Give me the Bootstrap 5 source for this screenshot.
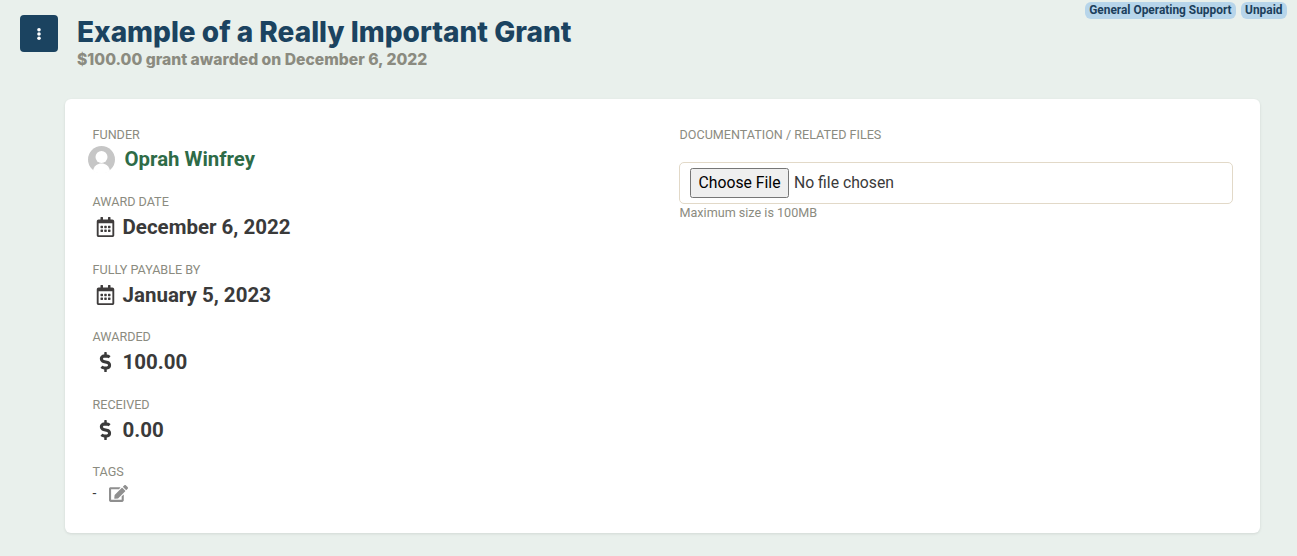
<!doctype html>
<html lang="en"><head><meta charset="utf-8"><title>Grant</title>
<link href="https://cdn.jsdelivr.net/npm/bootstrap@5.3.0/dist/css/bootstrap.min.css" rel="stylesheet">
<style>
html,body{height:556px;overflow:hidden}
body{background:#e9f0ec;font-family:Roboto,sans-serif;color:#3a3a3a}
.tagbar{top:2px;right:10px;gap:5px}
.pill{background:#b7d5ea;color:#1c3f5c;font-size:11.900px;font-weight:700;line-height:16px;padding:0 4.500px 0 4px;border-radius:6px;height:17px}
.head-row{padding:14px 0 0 20px;height:99px}
.menu-btn{width:38px;height:37px;background:#1b4360;border-radius:4px;margin-right:19px;margin-top:1px}
.ttl{font-family:Inter,sans-serif;font-weight:800;font-size:28px;line-height:34px;color:#1b4360;margin:1px 0 0}
.sub{font-family:Inter,sans-serif;font-weight:800;font-size:15.700px;line-height:20px;color:#8b8b80;margin-top:1px}
.panel{margin:0 37px 0 65px;height:434px;border-radius:6px;box-shadow:0 1px 3px rgba(0,0,0,.1);padding:28px 27px 0 27.500px}
.lhalf{width:587px}
.lab{font-size:12.600px;line-height:16px;color:#8b8b80;text-transform:uppercase}
.val{font-size:20.500px;font-weight:700;line-height:28px;color:#3a3a3a;margin-top:3px;margin-bottom:20.500px;height:28px}
.ico-box{width:25px;height:20px;margin-right:5px}
.funder{font-size:20.400px;font-weight:700;color:#2e6b47;line-height:28px;margin-left:-5px;margin-top:1px;margin-bottom:20px;height:30px}
.avatar{width:27px;height:27px;margin-right:10px}
.filebox{margin:19px 0 0 -.5px;height:42px;border:1px solid #e2d9c8;border-radius:5px;padding:0 10px;font-size:15.750px}
.filebox input::file-selector-button{margin-right:5px;padding:1px 6.500px}
.hint{font-size:12.600px;line-height:18px;color:#8b8b80}
.tagline{font-size:14px;line-height:20px;margin-top:3px}
.edit-ico{width:19px;height:17px;margin-left:13px}
</style></head><body>
<svg class="d-none"><defs>
<symbol id="cal" viewBox="0 0 448 512"><path fill="#3f3c3c" d="M148 288h-40c-6.600 0-12-5.400-12-12v-40c0-6.600 5.400-12 12-12h40c6.600 0 12 5.400 12 12v40c0 6.600-5.400 12-12 12zm108-12v-40c0-6.600-5.400-12-12-12h-40c-6.600 0-12 5.400-12 12v40c0 6.600 5.400 12 12 12h40c6.600 0 12-5.400 12-12zm96 0v-40c0-6.600-5.400-12-12-12h-40c-6.600 0-12 5.400-12 12v40c0 6.600 5.400 12 12 12h40c6.600 0 12-5.400 12-12zm-96 96v-40c0-6.600-5.400-12-12-12h-40c-6.600 0-12 5.400-12 12v40c0 6.600 5.400 12 12 12h40c6.600 0 12-5.400 12-12zm-96 0v-40c0-6.600-5.400-12-12-12h-40c-6.600 0-12 5.400-12 12v40c0 6.600 5.400 12 12 12h40c6.600 0 12-5.400 12-12zm192 0v-40c0-6.600-5.400-12-12-12h-40c-6.600 0-12 5.400-12 12v40c0 6.600 5.400 12 12 12h40c6.600 0 12-5.400 12-12zm96-260v352c0 26.500-21.500 48-48 48H48c-26.500 0-48-21.500-48-48V112c0-26.500 21.500-48 48-48h48V12c0-6.600 5.400-12 12-12h40c6.600 0 12 5.400 12 12v52h128V12c0-6.600 5.400-12 12-12h40c6.600 0 12 5.400 12 12v52h48c26.500 0 48 21.500 48 48zm-48 346V160H48v298c0 3.300 2.700 6 6 6h340c3.300 0 6-2.700 6-6z"/></symbol>
<symbol id="usd" viewBox="0 0 288 512"><path fill="#3a3a3a" d="M209.200 233.400l-108-31.600C88.700 198.200 80 186.500 80 173.500c0-16.300 13.200-29.500 29.500-29.500h66.300c12.200 0 24.200 3.700 34.200 10.500 6.100 4.100 14.300 3.100 19.500-2l34.800-34c7.100-6.900 6.100-18.400-1.800-24.500C238 74.800 207.400 64.100 176 64V16c0-8.800-7.200-16-16-16h-32c-8.800 0-16 7.200-16 16v48h-2.500C45.800 64-5.400 118.700.5 183.600c4.200 46.100 39.400 83.600 83.800 96.600l102.500 30c12.500 3.700 21.200 15.300 21.200 28.300 0 16.300-13.200 29.500-29.500 29.500h-66.300C100 368 88 364.300 78 357.500c-6.100-4.100-14.300-3.100-19.500 2l-34.800 34c-7.100 6.900-6.100 18.400 1.800 24.500 24.500 19.200 55.100 29.900 86.500 30v48c0 8.800 7.200 16 16 16h32c8.800 0 16-7.200 16-16v-48.200c46.600-.9 90.300-28.600 105.700-72.700 21.500-61.600-14.600-124.800-72.500-141.700z"/></symbol>
</defs></svg>
<div class="position-absolute d-flex tagbar"><span class="pill">General Operating Support</span><span class="pill">Unpaid</span></div>
<div class="d-flex head-row">
 <div class="menu-btn d-flex align-items-center justify-content-center"><svg width="4" height="12" viewBox="0 0 4 12" fill="#fff"><circle cx="2" cy="1.800" r="1.800"/><circle cx="2" cy="6" r="1.800"/><circle cx="2" cy="10.200" r="1.800"/></svg></div>
 <div><h1 class="ttl">Example of a Really Important Grant</h1><div class="sub">$100.00 grant awarded on December 6, 2022</div></div>
</div>
<div class="panel bg-white d-flex">
 <div class="lhalf">
  <div class="lab">Funder</div>
  <div class="funder d-flex align-items-center"><svg class="avatar" viewBox="0 0 27 27"><circle cx="13.500" cy="13.500" r="13.500" fill="#c6c6c6"/><circle cx="13.500" cy="11" r="6" fill="#fff"/><path d="M5 24.500c1-4.500 4.500-7 8.500-7s7.500 2.500 8.500 7a13.500 13.500 0 0 1-17 0z" fill="#fff"/></svg>Oprah Winfrey</div>
  <div class="lab">Award Date</div>
  <div class="val d-flex align-items-center"><svg class="ico-box"><use href="#cal"/></svg>December 6, 2022</div>
  <div class="lab">Fully Payable By</div>
  <div class="val d-flex align-items-center"><svg class="ico-box"><use href="#cal"/></svg>January 5, 2023</div>
  <div class="lab">Awarded</div>
  <div class="val d-flex align-items-center"><svg class="ico-box"><use href="#usd"/></svg>100.00</div>
  <div class="lab">Received</div>
  <div class="val d-flex align-items-center"><svg class="ico-box"><use href="#usd"/></svg>0.00</div>
  <div class="lab">Tags</div>
  <div class="tagline d-flex align-items-center">-<svg class="edit-ico" viewBox="0 0 576 512"><path fill="#8f8f8f" d="M402.600 83.200l90.200 90.200c3.800 3.800 3.800 10 0 13.800L274.400 405.600l-92.800 10.300c-12.400 1.400-22.900-9.100-21.500-21.500l10.300-92.800L388.800 83.200c3.800-3.800 10-3.800 13.800 0zm162-22.900l-48.800-48.800c-15.200-15.200-39.900-15.200-55.200 0l-35.400 35.400c-3.800 3.800-3.800 10 0 13.800l90.200 90.200c3.800 3.800 10 3.800 13.800 0l35.400-35.400c15.200-15.300 15.200-40 0-55.200zM384 346.200V448H64V128h229.800c3.200 0 6.200-1.300 8.500-3.500l40-40c7.600-7.600 2.200-20.500-8.500-20.500H48C21.500 64 0 85.500 0 112v352c0 26.500 21.500 48 48 48h352c26.500 0 48-21.500 48-48V306.200c0-10.700-12.900-16-20.500-8.500l-40 40c-2.200 2.300-3.500 5.300-3.500 8.500z"/></svg></div>
 </div>
 <div class="flex-grow-1">
  <div class="lab">Documentation / Related Files</div>
  <div class="filebox d-flex align-items-center"><input type="file" class="w-100"></div>
  <div class="hint">Maximum size is 100MB</div>
 </div>
</div>
<script src="https://cdn.jsdelivr.net/npm/bootstrap@5.3.0/dist/js/bootstrap.bundle.min.js"></script>
</body></html>
